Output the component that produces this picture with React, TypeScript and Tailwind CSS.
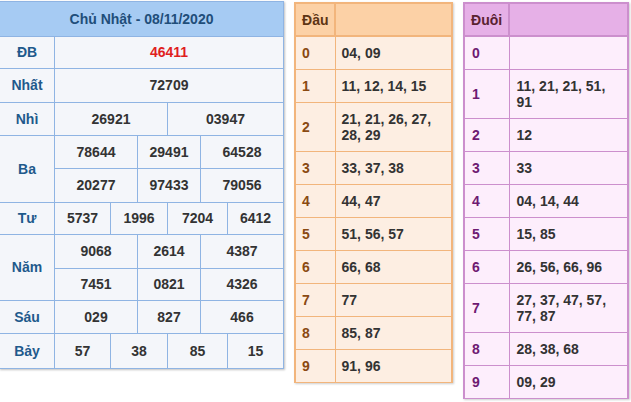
import React from "react";

const F = { fontFamily: '"Liberation Sans", Arial, sans-serif' };

const lc = "border border-[#8fb4e3] text-[#1f5a8c] text-center font-bold";
const vc = "border border-[#8fb4e3] text-[#333] text-center font-bold";

function LeftTable() {
  return (
    <div className="shrink-0 -ml-px mt-px shadow-[1px_1px_2px_rgba(0,0,0,0.25)]">
      <table className="table-fixed border-collapse bg-[#f4f6fa] text-[14px] w-[284px]">
        <colgroup>
          <col className="w-[55px]" />
          <col className="w-[56px]" />
          <col className="w-[27px]" />
          <col className="w-[30px]" />
          <col className="w-[33px]" />
          <col className="w-[27px]" />
          <col className="w-[56px]" />
        </colgroup>
        <tbody>
          <tr className="h-[35px]">
            <td colSpan={7} className="border border-[#8fb4e3] bg-[#a6cbf3] text-center font-bold text-[#1f4e7a]">
              Chủ Nhật - 08/11/2020
            </td>
          </tr>
          <tr className="h-[32px]">
            <td className={lc}>ĐB</td>
            <td colSpan={6} className="border border-[#8fb4e3] text-center font-bold text-[#e01e1e]">46411</td>
          </tr>
          <tr className="h-[34px]">
            <td className={lc}>Nhất</td>
            <td colSpan={6} className={vc}>72709</td>
          </tr>
          <tr className="h-[33px]">
            <td className={lc}>Nhì</td>
            <td colSpan={3} className={vc}>26921</td>
            <td colSpan={3} className={vc}>03947</td>
          </tr>
          <tr className="h-[33px]">
            <td rowSpan={2} className={lc}>Ba</td>
            <td colSpan={2} className={vc}>78644</td>
            <td colSpan={2} className={vc}>29491</td>
            <td colSpan={2} className={vc}>64528</td>
          </tr>
          <tr className="h-[34px]">
            <td colSpan={2} className={vc}>20277</td>
            <td colSpan={2} className={vc}>97433</td>
            <td colSpan={2} className={vc}>79056</td>
          </tr>
          <tr className="h-[32px]">
            <td className={lc}>Tư</td>
            <td className={vc}>5737</td>
            <td colSpan={2} className={vc}>1996</td>
            <td colSpan={2} className={vc}>7204</td>
            <td className={vc}>6412</td>
          </tr>
          <tr className="h-[34px]">
            <td rowSpan={2} className={lc}>Năm</td>
            <td colSpan={2} className={vc}>9068</td>
            <td colSpan={2} className={vc}>2614</td>
            <td colSpan={2} className={vc}>4387</td>
          </tr>
          <tr className="h-[32px]">
            <td colSpan={2} className={vc}>7451</td>
            <td colSpan={2} className={vc}>0821</td>
            <td colSpan={2} className={vc}>4326</td>
          </tr>
          <tr className="h-[33px]">
            <td className={lc}>Sáu</td>
            <td colSpan={2} className={vc}>029</td>
            <td colSpan={2} className={vc}>827</td>
            <td colSpan={2} className={vc}>466</td>
          </tr>
          <tr className="h-[35px]">
            <td className={lc}>Bảy</td>
            <td className={vc}>57</td>
            <td colSpan={2} className={vc}>38</td>
            <td colSpan={2} className={vc}>85</td>
            <td className={vc}>15</td>
          </tr>
        </tbody>
      </table>
    </div>
  );
}

const dau: [string, string][] = [
  ["0", "04, 09"],
  ["1", "11, 12, 14, 15"],
  ["2", "21, 21, 26, 27, 28, 29"],
  ["3", "33, 37, 38"],
  ["4", "44, 47"],
  ["5", "51, 56, 57"],
  ["6", "66, 68"],
  ["7", "77"],
  ["8", "85, 87"],
  ["9", "91, 96"],
];

const duoi: [string, string][] = [
  ["0", ""],
  ["1", "11, 21, 21, 51, 91"],
  ["2", "12"],
  ["3", "33"],
  ["4", "04, 14, 44"],
  ["5", "15, 85"],
  ["6", "26, 56, 66, 96"],
  ["7", "27, 37, 47, 57, 77, 87"],
  ["8", "28, 38, 68"],
  ["9", "09, 29"],
];

function DauTable() {
  return (
    <div className="shrink-0 mt-[2px] ml-[10px] shadow-[1px_1px_2px_rgba(0,0,0,0.2)]">
      <table className="table-fixed border-collapse bg-[#fdeee2] text-[14px] w-[157px] leading-[16px]">
        <colgroup>
          <col className="w-[40px]" />
          <col className="w-[117px]" />
        </colgroup>
        <tbody>
          <tr className="h-[33px]">
            <td className="border-2 border-[#f2b57c] bg-[#fcd1a6] px-[6px] font-bold text-[#5e3514] text-left">Đầu</td>
            <td className="border-2 border-[#f2b57c] bg-[#fcd1a6]"></td>
          </tr>
          {dau.map(([k, v]) => (
            <tr key={k} className={k === "2" ? "h-[49px]" : "h-[33px]"}>
              <td className="border border-[#f2b57c] border-l-2 px-[6px] font-bold text-[#8a4a12] text-left">{k}</td>
              <td className="border border-[#f2b57c] border-r-2 px-[6px] font-bold text-[#333] text-left">{v}</td>
            </tr>
          ))}
        </tbody>
      </table>
    </div>
  );
}

function DuoiTable() {
  return (
    <div className="shrink-0 mt-[2px] ml-[10px] shadow-[1px_1px_2px_rgba(0,0,0,0.2)]">
      <table className="table-fixed border-collapse bg-[#fdeefc] text-[14px] w-[164px] leading-[16px]">
        <colgroup>
          <col className="w-[45px]" />
          <col className="w-[119px]" />
        </colgroup>
        <tbody>
          <tr className="h-[33px]">
            <td className="border-2 border-[#cc8fcd] bg-[#e6b0e7] px-[6px] font-bold text-[#5a2230] text-left">Đuôi</td>
            <td className="border-2 border-[#cc8fcd] bg-[#e6b0e7]"></td>
          </tr>
          {duoi.map(([k, v]) => (
            <tr key={k} className={k === "1" || k === "7" ? "h-[49px]" : "h-[33px]"}>
              <td className="border border-[#cc8fcd] border-l-2 px-[7px] font-bold text-[#6e1a72] text-left">{k}</td>
              <td className="border border-[#cc8fcd] border-r-2 px-[7px] font-bold text-[#333] text-left">{v}</td>
            </tr>
          ))}
        </tbody>
      </table>
    </div>
  );
}

export default function App() {
  return (
    <div className="w-[631px] h-[402px] bg-white overflow-hidden flex items-start" style={F}>
      <LeftTable />
      <DauTable />
      <DuoiTable />
    </div>
  );
}
